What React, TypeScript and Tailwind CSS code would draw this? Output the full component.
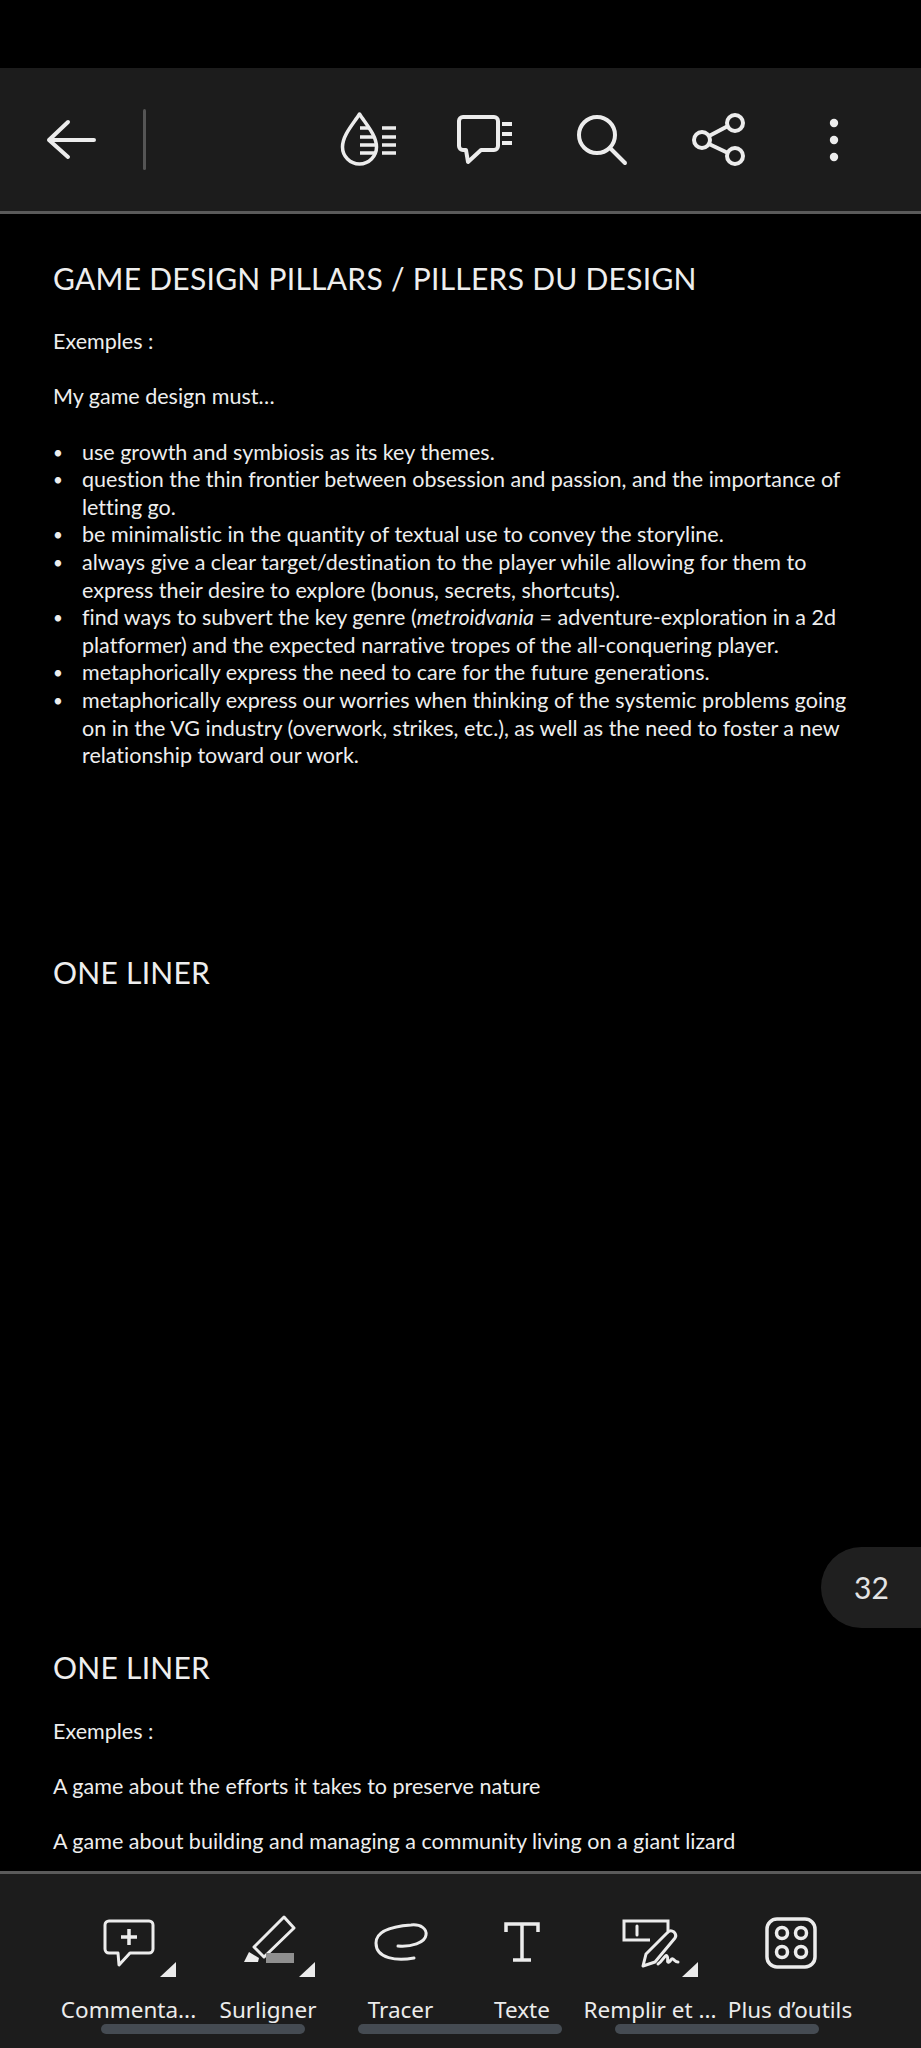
import type { ReactNode } from 'react';

const heading = "text-[30px] leading-[40px] tracking-[0.27px] text-[#eeeeee]";
const body = "text-[21.5px] leading-[27.6px] text-[#eeeeee]";

const bullets: ReactNode[][] = [
  ['use growth and symbiosis as its key themes.'],
  ['question the thin frontier between obsession and passion, and the importance of', 'letting go.'],
  ['be minimalistic in the quantity of textual use to convey the storyline.'],
  ['always give a clear target/destination to the player while allowing for them to', 'express their desire to explore (bonus, secrets, shortcuts).'],
  [
    <>find ways to subvert the key genre (<em>metroidvania</em> = adventure-exploration in a 2d</>,
    'platformer) and the expected narrative tropes of the all-conquering player.',
  ],
  ['metaphorically express the need to care for the future generations.'],
  [
    'metaphorically express our worries when thinking of the systemic problems going',
    'on in the VG industry (overwork, strikes, etc.), as well as the need to foster a new',
    'relationship toward our work.',
  ],
];

function Corner({ x }: { x: number }) {
  return <polygon points="0,15 16,15 16,0" transform={`translate(${x} 47)`} fill="#ebebeb" stroke="none" />;
}

function TopBar() {
  return (
    <header className="flex h-[146px] shrink-0 items-start border-b-[3px] border-[#5a5a5a] bg-[#1c1c1c] text-[#ececec]">
      <svg className="ml-[44px] mt-[40px]" width="54" height="54" viewBox="0 0 54 54" fill="none" stroke="currentColor" strokeWidth="4" strokeLinecap="round" strokeLinejoin="round">
        <path d="M5 32h45M24 14 5 32l19 17" />
      </svg>
      <div className="ml-[45px] mt-[41px] h-[61px] w-[3px] rounded-full bg-[#555]" />
      <svg className="ml-[193px] mt-[42px]" width="60" height="60" viewBox="0 0 60 60" fill="none" stroke="currentColor">
        <path strokeWidth="3.5" strokeLinejoin="round" d="M20.5 4C15 13 3.5 25 3.5 37a17 17 0 0 0 34 0C37.5 25 26 13 20.5 4Z" />
        <path strokeWidth="3.5" d="M21 18h9M21 27h14M21 35h16M21 43h16M43 18h14M43 27h14M43 35h14M43 43h14" />
      </svg>
      <svg className="ml-[57px] mt-[44px]" width="60" height="56" viewBox="0 0 60 56" fill="none" stroke="currentColor">
        <path strokeWidth="4" strokeLinejoin="round" d="M7 5h31a4 4 0 0 1 4 4v25a4 4 0 0 1-4 4H25L12 50l-2-12H7a4 4 0 0 1-4-4V9a4 4 0 0 1 4-4Z" />
        <path strokeWidth="4" d="M46 12h10M46 22h10M46 31h10" />
      </svg>
      <svg className="ml-[58px] mt-[44px]" width="56" height="56" viewBox="0 0 56 56" fill="none" stroke="currentColor" strokeWidth="4" strokeLinecap="round">
        <circle cx="23" cy="23" r="18" />
        <path d="m36 36 15 15" />
      </svg>
      <svg className="ml-[60px] mt-[44px]" width="60" height="56" viewBox="0 0 60 56" fill="none" stroke="currentColor" strokeWidth="4">
        <circle cx="12" cy="28" r="8" />
        <circle cx="45" cy="11" r="8" />
        <circle cx="45" cy="44" r="8" />
        <path d="m19 24 19-10M19 32l19 9" />
      </svg>
      <svg className="ml-[79px] mt-[50px]" width="10" height="46" viewBox="0 0 10 46" fill="currentColor">
        <circle cx="5" cy="5" r="4.2" />
        <circle cx="5" cy="22" r="4.2" />
        <circle cx="5" cy="39" r="4.2" />
      </svg>
    </header>
  );
}

function Page() {
  return (
    <main className="relative min-h-0 flex-1 overflow-hidden bg-black pl-[53px] pt-[44px] [font-family:Lato,sans-serif] [font-variant-ligatures:none]">
      <h1 className={heading}>GAME DESIGN PILLARS / PILLERS DU DESIGN</h1>
      <p className={`${body} mt-[30px]`}>Exemples :</p>
      <p className={`${body} mt-[27.5px]`}>My game design must…</p>
      <ul className="mt-[28px]">
        {bullets.map((lines, i) => (
          <li key={i} className={`${body} flex`}>
            <span className="w-[29px] shrink-0 text-[17px]">•</span>
            <div>
              {lines.map((line, j) => (
                <div key={j} className="whitespace-nowrap">{line}</div>
              ))}
            </div>
          </li>
        ))}
      </ul>
      <h2 className={`${heading} mt-[182.5px]`}>ONE LINER</h2>
      <h2 className={`${heading} mt-[655px]`}>ONE LINER</h2>
      <p className={`${body} mt-[30.5px]`}>Exemples :</p>
      <p className={`${body} mt-[27.5px]`}>A game about the efforts it takes to preserve nature</p>
      <p className={`${body} mt-[27px]`}>A game about building and managing a community living on a giant lizard</p>

      {/* page number pill */}
      <div className="absolute right-0 top-[1333px] flex h-[81px] w-[100px] items-center rounded-l-[41px] bg-[#1f1f1f] pl-[33px] text-[30px] text-[#e4e4e4]">
        32
      </div>
    </main>
  );
}

const tools: { label: string; width: string; icon: ReactNode }[] = [
  {
    label: 'Commenta...',
    width: 'w-[141px]',
    icon: (
      <svg width="100" height="66" viewBox="-10 0 100 66" fill="none" stroke="currentColor" strokeWidth="3">
        <path strokeLinejoin="round" d="M20 6h40a4 4 0 0 1 4 4v24a4 4 0 0 1-4 4H41L30 50l-1-12h-9a4 4 0 0 1-4-4V10a4 4 0 0 1 4-4Z" />
        <path strokeWidth="3.5" d="M40 14v16M32 22h16" />
        <Corner x={71} />
      </svg>
    ),
  },
  {
    label: 'Surligner',
    width: 'w-[138px]',
    icon: (
      <svg width="100" height="66" viewBox="-6 0 100 66" fill="none" stroke="currentColor" strokeWidth="3">
        <path strokeLinejoin="round" d="m60 2 10 11-30 29-10-10Z" />
        <polygon points="20,47 25,37 35,43 34,47" fill="currentColor" stroke="none" />
        <rect x="42" y="38" width="28" height="10" fill="#8f8f8f" stroke="none" />
        <Corner x={75} />
      </svg>
    ),
  },
  {
    label: 'Tracer',
    width: 'w-[127px]',
    icon: (
      <svg width="64" height="66" viewBox="0 0 64 66" fill="none" stroke="currentColor" strokeWidth="3" strokeLinecap="round">
        <path d="M45 43C28 46 7 44 7 28 7 14 28 11 42 10c10-1 16 4 15 10-1 8-15 12-28 11" />
      </svg>
    ),
  },
  {
    label: 'Texte',
    width: 'w-[116px]',
    icon: (
      <svg width="40" height="66" viewBox="0 0 40 66" fill="none" stroke="currentColor" strokeWidth="3.5">
        <path d="M4 17V9h32v8M20 9v36M11 45h18" />
      </svg>
    ),
  },
  {
    label: 'Remplir et ...',
    width: 'w-[140px]',
    icon: (
      <svg width="100" height="66" viewBox="-8 0 100 66" fill="none" stroke="currentColor" strokeWidth="3" strokeLinejoin="round" strokeLinecap="round">
        <path strokeLinecap="butt" strokeLinejoin="miter" d="M60 16V6H16v19h26" />
        <path d="M29 11v9" />
        <path d="M59 18q3-4 7-1q3 3 1 6L47 47l-12 4 3-12Z" />
        <path d="M50 49c5-3 7-10 9-8s-1 7 2 6c2-1 2-4 4-3s2 3 5 3" />
        <Corner x={74} />
      </svg>
    ),
  },
  {
    label: 'Plus d’outils',
    width: 'w-[140px]',
    icon: (
      <svg width="60" height="66" viewBox="0 0 60 66" fill="none" stroke="currentColor" strokeWidth="3.5">
        <rect x="7" y="4" width="48" height="48" rx="10" />
        <circle cx="22" cy="18" r="5.5" />
        <circle cx="41" cy="18" r="5.5" />
        <circle cx="22" cy="37" r="5.5" />
        <circle cx="41" cy="37" r="5.5" />
      </svg>
    ),
  },
];

function BottomBar() {
  return (
    <footer className="relative h-[177px] shrink-0 border-t-[3px] border-[#5a5a5a] bg-[#1c1c1c] pl-[58px] pt-[41px] text-[#ececec]">
      <div className="flex">
        {tools.map((tool) => (
          <div key={tool.label} className={`${tool.width} flex flex-col items-center`}>
            <div className="flex h-[66px] items-start">{tool.icon}</div>
            <span className="mt-[13px] whitespace-nowrap text-[22.5px] leading-[32px] [font-family:'Noto_Sans',sans-serif]">{tool.label}</span>
          </div>
        ))}
      </div>
      {/* stray handles drawn over the labels */}
      <div className="absolute bottom-[14px] left-[101px] flex gap-[53px]">
        <div className="h-[10px] w-[204px] rounded-full bg-[#454b52]" />
        <div className="h-[10px] w-[204px] rounded-full bg-[#454b52]" />
        <div className="h-[10px] w-[204px] rounded-full bg-[#454b52]" />
      </div>
    </footer>
  );
}

export default function App() {
  return (
    <div className="flex h-[2048px] flex-col overflow-hidden bg-black">
      <div className="h-[68px] shrink-0 bg-black" />
      <TopBar />
      <Page />
      <BottomBar />
    </div>
  );
}
